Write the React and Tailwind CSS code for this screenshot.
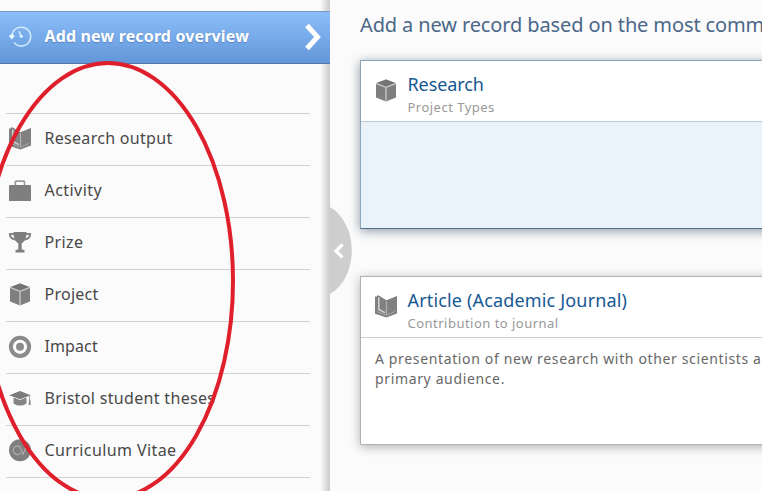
import React from "react";

function HistoryIcon() {
  return (
    <svg className="block h-6 w-6" viewBox="0 0 24 24" fill="none" stroke="#d3ebfc" strokeWidth="1.5">
      <path d="M3.9 12a9.4 9.4 0 1 1 2 6.4" />
      <path d="M0.8 12l3-2.2 3 2.2-3 3.4z" fill="#e6f7ff" stroke="none" />
      <path d="M11 7.2l2 4.8" />
      <circle cx="13.3" cy="12.3" r="1.5" fill="#e6f7ff" stroke="none" />
    </svg>
  );
}

function BookIcon() {
  return (
    <svg className="block h-6 w-6" viewBox="0 0 24 24">
      <path d="M1 2.6h2V1.4h2l1.4 1.2 6 3.6L23 2v17.4L12.4 23.6 1 19.8z" fill="#808080" />
      <path d="M3 17.6l9.4 3.6 8.8-3.8" fill="none" stroke="#a8a8a8" strokeWidth="1" />
      <path d="M12.5 7v14" stroke="#b2b2b2" strokeWidth="1.2" />
      <path d="M4.8 3.5v12l6.2 3.2" fill="none" stroke="#d0d0d0" strokeWidth="1.5" />
    </svg>
  );
}

function CaseIcon() {
  return (
    <svg className="block h-6 w-6" viewBox="0 0 24 24">
      <path d="M7.3 7.5V4.1q0-1 1-1h7.2q1 0 1 1v3.4" fill="none" stroke="#999" strokeWidth="1.7" />
      <path d="M1 8q0-1 1-1h20q1 0 1 1v15H1z" fill="#7f7f7f" />
    </svg>
  );
}

function TrophyIcon() {
  return (
    <svg className="block h-6 w-6" viewBox="0 0 24 24">
      <path d="M6.5 4H1.9c0 3.8 2.4 5.2 6.2 5.6M17.5 4h4.6c0 3.8-2.4 5.2-6.2 5.6" fill="none" stroke="#858585" strokeWidth="2" />
      <path d="M5.5 2h13c0 6-1.4 9.4-4.8 11.4V19.2l2.8 1v2.4h-9v-2.4l2.8-1v-5.8C6.9 11.4 5.5 8 5.5 2z" fill="#7f7f7f" />
    </svg>
  );
}

function CubeIcon() {
  return (
    <svg className="block h-6 w-6" viewBox="0 0 24 24">
      <path d="M12 1.6l10 3.6v14.4L12 23.6 2 19.6V5.2z" fill="#7f7f7f" />
      <path d="M12 1.6l10 3.6L12 9.2 2 5.2z" fill="#747474" />
      <path d="M2 5.4l10 4 10-4M12 9.4V23" fill="none" stroke="#cacaca" strokeWidth="1.3" />
    </svg>
  );
}

function TargetIcon() {
  return (
    <svg className="block h-6 w-6" viewBox="0 0 24 24">
      <circle cx="12" cy="12.8" r="9.1" fill="#fbfbfb" stroke="#8b8b8b" strokeWidth="4" />
      <circle cx="12" cy="12.8" r="4" fill="#8b8b8b" />
    </svg>
  );
}

function CapIcon() {
  return (
    <svg className="block h-6 w-6" viewBox="0 0 24 24">
      <path d="M1.2 9.2L12 5l10.8 4.2L12 13.2z" fill="#7c7c7c" />
      <path d="M5.5 11.6l6.5 2.3 6.5-2.3v5.8q-6.5 4.4-13 0z" fill="#858585" />
      <path d="M21.6 9.5V14" stroke="#999" strokeWidth="1" />
      <path d="M21 14h1.4l.4 5h-2.2z" fill="#8c8c8c" />
    </svg>
  );
}

function CvIcon() {
  return (
    <svg className="block h-6 w-6" viewBox="0 0 24 24">
      <circle cx="12" cy="12.3" r="11" fill="#7f7f7f" />
      <path d="M11.5 8.5A4.3 4.3 0 1 0 11 16.3l2-1M11.6 8.3l3.4 8 4-9" fill="none" stroke="#b0b0b0" strokeWidth="1.2" />
    </svg>
  );
}

const items = [
  { label: "Research output", Icon: BookIcon, cls: "tracking-[0.3px]" },
  { label: "Activity", Icon: CaseIcon, cls: "tracking-[0.45px]" },
  { label: "Prize", Icon: TrophyIcon, cls: "tracking-[0.4px]" },
  { label: "Project", Icon: CubeIcon, cls: "tracking-[0.25px]" },
  { label: "Impact", Icon: TargetIcon, cls: "tracking-[0.1px]" },
  { label: "Bristol student theses", Icon: CapIcon, cls: "tracking-[0.33px]" },
  { label: "Curriculum Vitae", Icon: CvIcon, cls: "tracking-[0.4px]" },
];

function Sidebar() {
  return (
    <aside className="h-full w-[330px] shrink-0 bg-gradient-to-r from-[#fbfbfb] from-[320px] to-[#cbcbcb] pt-[11px]">
      <div className="flex h-[53px] items-center border-y border-t-[#7299c3] border-b-[#5378a6] bg-gradient-to-b from-[#8dbefa] to-[#6196d8] pb-[3px] pl-2 text-white">
        <HistoryIcon />
        <span className="ml-[12.5px] whitespace-nowrap text-[16px] font-bold leading-6 tracking-[0.15px] [text-shadow:0_1px_1px_#5b86b8]">
          Add new record overview
        </span>
        <svg className="ml-auto mr-2 h-[30px] w-[18px] translate-y-px" viewBox="0 0 18 30" fill="none">
          <path d="M3 3.5l10.5 11.5L3 26.5" stroke="#fff" strokeWidth="5" />
        </svg>
      </div>
      <ul className="ml-1.5 mr-5 mt-[49px] border-t border-[#d1d1d1] text-[#484848]">
        {items.map(({ label, Icon, cls }) => (
          <li key={label} className="flex h-[52px] items-center border-b border-[#d1d1d1] pb-[3px] pl-0.5">
            <Icon />
            <span className={"ml-[12.5px] whitespace-nowrap text-[16px] leading-6 " + cls}>{label}</span>
          </li>
        ))}
      </ul>
    </aside>
  );
}

function Card({ icon, title, titleClass, subtitle, className, headClass, children }) {
  return (
    <section className={"flex h-[169px] w-[420px] flex-col border " + className}>
      <header className={"flex h-[61px] shrink-0 border-b bg-white pl-[13px] " + headClass}>
        <div className="pt-[17px]">{icon}</div>
        <div className="ml-[9.5px] whitespace-nowrap pt-[11px]">
          <h2 className={"text-[18px] leading-6 text-[#165893] " + titleClass}>{title}</h2>
          <p className="pt-px text-[13px] leading-5 tracking-[0.48px] text-[#989898]">{subtitle}</p>
        </div>
      </header>
      {children}
    </section>
  );
}

export default function App() {
  return (
    <div className="relative flex h-[491px] w-[762px] overflow-hidden bg-[#fbfbfb] font-['Noto_Sans','Open_Sans',sans-serif]">
      <Sidebar />
      <main className="h-full min-w-0 flex-1 pl-[30px] pt-[11px]">
        <h1 className="h-[49px] whitespace-nowrap text-[20px] leading-7 tracking-[-0.12px] text-[#4b6789]">
          Add a new record based on the most comm
        </h1>
        <Card
          icon={<CubeIcon />}
          title="Research"
          titleClass="tracking-[-0.1px]"
          subtitle="Project Types"
          className="border-[#8ba5b9] border-b-[#566f8a] bg-[#eaf2fa] shadow-[0_2px_10px_#8a98a4]"
          headClass="border-[#becbd5]"
        />
        <Card
          icon={<BookIcon />}
          title="Article (Academic Journal)"
          titleClass="tracking-[0.16px]"
          subtitle="Contribution to journal"
          className="mt-[47px] border-[#b1b1b1] bg-white shadow-[0_2px_10px_#b0b0b0]"
          headClass="border-[#cfcfcf]"
        >
          <p className="whitespace-nowrap pl-3.5 pt-[11px] text-[14px] leading-5 tracking-[0.64px] text-[#686868]">
            A presentation of new research with other scientists a
            <br />
            primary audience.
          </p>
        </Card>
      </main>
      <svg className="absolute left-[330px] top-[205px] h-[92px] w-[22px]" viewBox="0 0 22 92">
        <path d="M0 2C29 19 29 72 0 89z" fill="#cecece" />
        <path d="M12.5 39.5l-6.5 6.5 6.5 6.5" fill="none" stroke="#fff" strokeWidth="3.2" />
      </svg>
      <svg className="pointer-events-none absolute inset-0" width="762" height="491" viewBox="0 0 762 491">
        <ellipse cx="108" cy="281" rx="125" ry="218" fill="none" stroke="#df202c" strokeWidth="4" />
      </svg>
    </div>
  );
}
